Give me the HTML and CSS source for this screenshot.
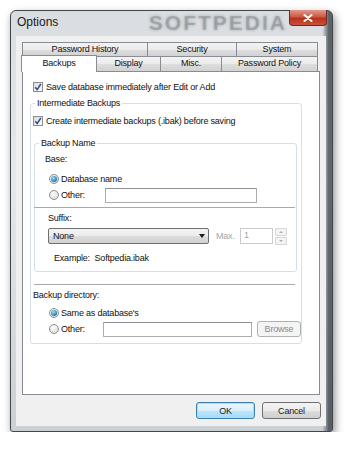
FILE: index.html
```html
<!DOCTYPE html>
<html lang="en">

<head>
    <meta charset="UTF-8">
    <title>Options</title>
    <link rel="stylesheet" href="styles.css">
</head>

<body>
    <div class="window">
        <div class="titlebar">
            <span class="title">Options</span>
            <span class="watermark">SOFTPEDIA</span>
            <span class="close">
                <svg width="10" height="8" viewBox="0 0 10 8">
                    <path d="M1.5 1 L8.5 7 M8.5 1 L1.5 7" stroke="#fff" stroke-width="2" stroke-linecap="round" fill="none"/>
                </svg>
            </span>
        </div>

        <div class="client">
            <!-- tabs -->
            <div class="tabs">
                <div class="tabrow">
                    <span class="tab t-history">Password History</span>
                    <span class="tab t-security">Security</span>
                    <span class="tab t-system">System</span>
                </div>
                <div class="tabrow front">
                    <span class="tab t-backups active">Backups</span>
                    <span class="tab t-display">Display</span>
                    <span class="tab t-misc">Misc.</span>
                    <span class="tab t-policy">Password Policy</span>
                </div>
            </div>

            <div class="panel">
                <div class="check-row">
                    <span class="checkbox checked">
                        <svg width="8" height="8" viewBox="0 0 8 8"><path d="M1.2 4.2 L3.2 6.6 L6.8 1" stroke="#34498a" stroke-width="1.5" fill="none"/></svg>
                    </span>
                    <span>Save database immediately after Edit or Add</span>
                </div>

                <fieldset class="group intermediate">
                    <legend>Intermediate Backups</legend>
                    <div class="check-row second">
                        <span class="checkbox checked">
                            <svg width="8" height="8" viewBox="0 0 8 8"><path d="M1.2 4.2 L3.2 6.6 L6.8 1" stroke="#34498a" stroke-width="1.5" fill="none"/></svg>
                        </span>
                        <span>Create intermediate backups (.ibak) before saving</span>
                    </div>

                    <fieldset class="group backup-name">
                        <legend>Backup Name</legend>
                        <div class="label base">Base:</div>
                        <div class="radio-row first">
                            <span class="radio selected"></span>
                            <span>Database name</span>
                        </div>
                        <div class="radio-row">
                            <span class="radio"></span>
                            <span class="radio-label name-other">Other:</span>
                            <span class="textbox name-input"></span>
                        </div>
                        <div class="separator"></div>
                        <div class="label suffix">Suffix:</div>
                        <div class="select-row">
                            <span class="select">None<i class="arrow"></i></span>
                            <span class="disabled-label">Max.</span>
                            <span class="textbox number">1</span>
                            <span class="spinner">
                                <span class="spin up"></span>
                                <span class="spin down"></span>
                            </span>
                        </div>
                        <div class="label example">Example:&nbsp; Softpedia.ibak</div>
                    </fieldset>

                    <div class="separator dir-sep"></div>
                    <div class="label directory">Backup directory:</div>
                    <div class="radio-row dir-first">
                        <span class="radio selected"></span>
                        <span>Same as database's</span>
                    </div>
                    <div class="radio-row dir">
                        <span class="radio"></span>
                        <span class="radio-label dir-other">Other:</span>
                        <span class="textbox dir-input"></span>
                        <span class="btn disabled">Browse</span>
                    </div>
                </fieldset>
            </div>

            <div class="buttons">
                <span class="btn default">OK</span>
                <span class="btn">Cancel</span>
            </div>
        </div>
    </div>
</body>

</html>
```

FILE: styles.css
```css
* {
    box-sizing: border-box;
}

body {
    margin: 0;
    background: #fff;
    font-family: "Liberation Sans Narrow", "Liberation Sans", Arial, sans-serif;
    font-size: 9px;
    letter-spacing: -0.2px;
    color: #111;
}

/* window frame */
.window {
    margin: 10px 0 0 10px;
    width: 323px;
    height: 422px;
    border: 1px solid #41464b;
    border-radius: 6px 6px 3px 3px;
    padding: 0 6px 5px 5px;
    display: flex;
    flex-direction: column;
    background: linear-gradient(90deg, rgba(0, 0, 0, 0) 97%, rgba(40, 46, 54, .7) 99%),
        linear-gradient(#d9dde1, #e6e8eb 40%, #cbd0d5);
    box-shadow: 2px 4px 8px rgba(0, 0, 0, .45);
}

.titlebar {
    height: 25px;
    display: flex;
    align-items: flex-start;
    margin-right: -1px;
}

.title {
    font-size: 12px;
    letter-spacing: 0;
    line-height: 14px;
    margin: 4px 0 0 1px;
    color: #1a1a1a;
}

.watermark {
    margin: 1px 2px 0 auto;
    font: bold 21px/22px "Liberation Sans", Arial, sans-serif;
    letter-spacing: 2px;
    color: rgba(70, 76, 82, .22);
    text-shadow: 0 0 3px rgba(70, 76, 82, .35);
}

.close {
    width: 38px;
    height: 16px;
    margin: -1px 0 0 0;
    border: 1px solid #6b2a22;
    border-top: 0;
    border-radius: 0 0 4px 4px;
    background: linear-gradient(#e09a8c, #cc5a44 45%, #b7311c 55%, #c9523a);
    display: flex;
    align-items: center;
    justify-content: center;
}

.client {
    flex: 1;
    background: #f0f0f0;
    padding: 6px 0 0 6px;
}

/* tabs */
.tabs {
    width: 296px;
}

.tabrow {
    display: flex;
    height: 14px;
}

.tabrow.front {
    height: 15px;
}

.tab {
    border: 1px solid #898c95;
    border-bottom: 0;
    margin-right: -1px;
    background: linear-gradient(#f3f3f3, #ebebeb 50%, #dedede 50%, #d2d2d2);
    text-align: center;
    line-height: 13px;
}

.t-history { width: 126px; }
.t-security { width: 90px; }
.t-system { width: 82px; }
.t-backups { width: 76px; }
.t-display { width: 65px; }
.t-misc { width: 62px; }
.t-policy { width: 97px; }

.tab.active {
    position: relative;
    z-index: 1;
    background: #fff;
    height: 17px;
    margin-top: -1px;
    margin-left: -1px;
    line-height: 14px;
}

.panel {
    width: 298px;
    height: 324px;
    border: 1px solid #898c95;
    background: #fff;
    padding: 10px 0 0 10px;
}

/* controls */
.check-row {
    display: flex;
    align-items: center;
    height: 10px;
    gap: 3px;
    white-space: nowrap;
}

.check-row.second {
    margin-top: 7px;
}

.checkbox {
    width: 10px;
    height: 10px;
    flex: none;
    border: 1px solid #8e8f8f;
    background: linear-gradient(135deg, #dcdcdc, #fbfbfb);
    display: flex;
    align-items: center;
    justify-content: center;
}

.group {
    margin: 0;
    padding: 0;
    border: 1px solid #d5dfe5;
    border-radius: 3px;
    min-width: 0;
}

.group legend {
    line-height: 12px;
    padding: 0 2px;
    margin-left: 2px;
}

.intermediate {
    margin: 5px 0 0 -3px;
    width: 272px;
    padding: 0 0 6px 2px;
}

.backup-name {
    margin: 11px 0 0 1px;
    width: 263px;
    padding: 0 0 7px 0;
}

.backup-name legend {
    margin-left: 4px;
}

.label {
    line-height: 12px;
    white-space: nowrap;
}

.label.base {
    margin-top: 4px;
    padding-left: 10px;
}

.label.suffix {
    margin-top: 4px;
    padding-left: 13px;
}

.label.example {
    margin-top: 8px;
    padding-left: 19px;
}

.label.directory {
    margin-top: 4px;
}

.radio-row {
    display: flex;
    align-items: center;
    height: 16px;
    gap: 2px;
    padding-left: 14px;
    white-space: nowrap;
}

.radio-row.first {
    margin-top: 6px;
}

.radio-row.dir-first {
    margin-top: 4px;
    padding-left: 16px;
}

.radio-row.dir {
    padding-left: 16px;
}

.radio {
    width: 10px;
    height: 10px;
    flex: none;
    border-radius: 50%;
    border: 1px solid #8e8f8f;
    background: radial-gradient(circle at 40% 35%, #fdfdfd, #d4d4d4);
    display: flex;
    align-items: center;
    justify-content: center;
}

.radio.selected::after {
    content: "";
    width: 6px;
    height: 6px;
    border-radius: 50%;
    background: radial-gradient(circle at 40% 35%, #a8dcf6, #1c78b5 70%, #0e4f86);
}

.radio-label.name-other {
    width: 42px;
}

.radio-label.dir-other {
    width: 40px;
}

.textbox {
    height: 15px;
    border: 1px solid #abadb3;
    border-top-color: #8e9298;
    background: #fff;
}

.name-input {
    width: 152px;
}

.dir-input {
    width: 149px;
}

.separator {
    height: 1px;
    background: #a9a9a9;
    margin: 4px 0 0 -1px;
    width: 261px;
}

.separator.dir-sep {
    margin: 12px 0 0 1px;
}

.select-row {
    display: flex;
    align-items: center;
    height: 16px;
    margin: 4px 0 0 13px;
}

.select {
    width: 161px;
    height: 16px;
    border: 1px solid #707070;
    border-radius: 2px;
    background: linear-gradient(#f3f3f3, #ebebeb 50%, #dddddd 50%, #d1d1d1);
    display: flex;
    align-items: center;
    padding-left: 4px;
}

.arrow {
    margin-left: auto;
    margin-right: 3px;
    border-left: 3px solid transparent;
    border-right: 3px solid transparent;
    border-top: 4px solid #1a1a1a;
}

.disabled-label {
    color: #a4a4a4;
    width: 24px;
    margin-left: 7px;
}

.textbox.number {
    width: 33px;
    height: 16px;
    border-color: #c9cbcf;
    color: #a4a4a4;
    padding-left: 3px;
    line-height: 13px;
}

.spinner {
    margin-left: 2px;
    width: 12px;
    height: 17px;
    display: flex;
    flex-direction: column;
    gap: 1px;
}

.spin {
    flex: 1;
    border: 1px solid #d4d6d9;
    border-radius: 1px;
    background: #f4f4f4;
    display: flex;
    align-items: center;
    justify-content: center;
}

.spin::after {
    content: "";
    border-left: 2px solid transparent;
    border-right: 2px solid transparent;
}

.spin.up::after {
    border-bottom: 2px solid #b0b0b0;
}

.spin.down::after {
    border-top: 2px solid #b0b0b0;
}

/* buttons */
.btn {
    width: 59px;
    height: 17px;
    border: 1px solid #707070;
    border-radius: 3px;
    background: linear-gradient(#f3f3f3, #ebebeb 50%, #dddddd 50%, #cfcfcf);
    display: flex;
    align-items: center;
    justify-content: center;
    color: #1a1a1a;
}

.btn.disabled {
    width: 44px;
    height: 16px;
    margin-left: 3px;
    border-color: #adb2b5;
    background: #f4f4f4;
    color: #8a8a8a;
}

.btn.default {
    border-color: #3c7fb1;
    background: linear-gradient(#eaf6fd, #d9f0fc 50%, #bee6fd 50%, #a7d9f5);
    box-shadow: inset 0 0 0 1px #a6e0fb;
}

.buttons {
    display: flex;
    justify-content: flex-end;
    gap: 7px;
    margin-top: 7px;
    padding-right: 5px;
}
```
